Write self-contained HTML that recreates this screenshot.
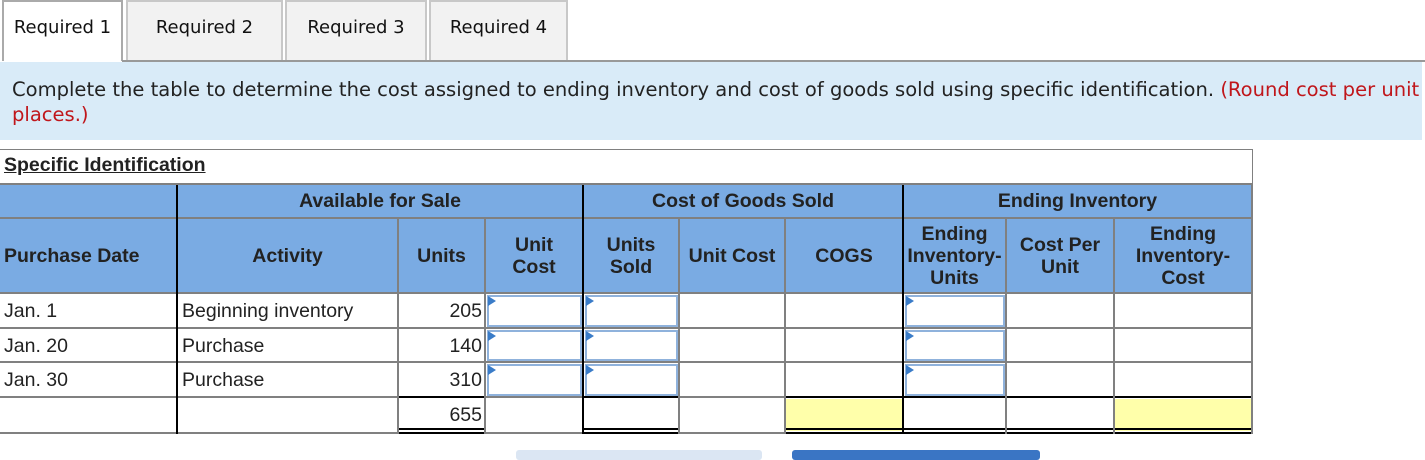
<!DOCTYPE html>
<html><head><meta charset="utf-8"><style>
*{margin:0;padding:0;box-sizing:border-box}
body{width:1425px;height:455px;background:#fff;position:relative;overflow:hidden;font-family:"Liberation Sans",Arial,sans-serif;color:#222}
.a{position:absolute}
.tab{position:absolute;top:0;height:61px;border:2px solid #c8c8c8;border-bottom:none;background:#f2f2f2;font-family:"DejaVu Sans",Verdana,sans-serif;font-size:18px;color:#111;text-align:center;line-height:52px}
.h{position:absolute;background:#808080;height:2px}
.v{position:absolute;background:#808080;width:2px}
.k{background:#000}
.t{position:absolute;font-size:19.5px;color:#222}
.hd{position:absolute;font-size:19.5px;font-weight:bold;color:#222;text-align:center;display:flex;align-items:center;justify-content:center;line-height:22px}
.in{position:absolute;border:2px solid #8fb2dc;background:#fff}
.in:before{content:"";position:absolute;left:-1px;top:-1px;border-left:8px solid #3a7cc8;border-top:5px solid transparent;border-bottom:5px solid transparent}
</style></head><body>
<div class="tab" style="left:2px;width:121px;background:#fff;border-color:#aaa">Required 1</div>
<div class="tab" style="left:126px;width:157px">Required 2</div>
<div class="tab" style="left:285px;width:142px">Required 3</div>
<div class="tab" style="left:429px;width:139px">Required 4</div>
<div class="a" style="left:122px;top:60px;width:1303px;height:2px;background:#999"></div>
<div class="a" style="left:0;top:62px;width:1422px;height:78px;background:#d9ebf8"></div>
<div class="a" style="left:12px;top:77px;width:1410px;overflow:hidden;white-space:nowrap;font-family:'DejaVu Sans',Verdana,sans-serif;font-size:19.55px;line-height:25px;color:#222">Complete the table to determine the cost assigned to ending inventory and cost of goods sold using specific identification. <span style="color:#c0161b">(Round cost per unit answers to 2 decimal</span><br><span style="color:#c0161b">places.)</span></div>

<div class="a" style="left:0;top:149px;width:1253px;height:36px;border:1px solid #808080;border-left:none"></div>
<div class="t" style="left:4px;top:154px;font-weight:bold;text-decoration:underline">Specific Identification</div>

<div class="a" style="left:0;top:185px;width:1252px;height:108px;background:#7aabe3"></div>
<div class="a" style="left:785px;top:399px;width:118px;height:32px;background:#ffffaa"></div>
<div class="a" style="left:1114px;top:399px;width:138px;height:32px;background:#ffffaa"></div>

<div class="h" style="left:0;top:183px;width:1253px"></div>
<div class="h" style="left:0;top:217px;width:1253px"></div>
<div class="h" style="left:0;top:292px;width:1253px"></div>
<div class="h" style="left:0;top:327px;width:1253px"></div>
<div class="h" style="left:0;top:361px;width:1253px"></div>
<div class="h" style="left:0;top:396px;width:1253px"></div>
<div class="h k" style="left:398px;top:396px;width:87px"></div>
<div class="h k" style="left:583px;top:396px;width:96px"></div>
<div class="h k" style="left:785px;top:396px;width:467px"></div>
<div class="h" style="left:0;top:432px;width:1253px"></div>
<div class="h k" style="left:398px;top:428px;width:87px"></div>
<div class="h k" style="left:398px;top:432px;width:87px"></div>
<div class="h k" style="left:583px;top:428px;width:96px"></div>
<div class="h k" style="left:583px;top:432px;width:96px"></div>
<div class="h k" style="left:785px;top:428px;width:467px"></div>
<div class="h k" style="left:785px;top:432px;width:467px"></div>

<div class="v k" style="left:176px;top:185px;height:249px"></div>
<div class="v" style="left:397px;top:219px;height:215px"></div>
<div class="v" style="left:484px;top:219px;height:215px"></div>
<div class="v k" style="left:582px;top:185px;height:249px"></div>
<div class="v" style="left:678px;top:219px;height:215px"></div>
<div class="v" style="left:784px;top:219px;height:215px"></div>
<div class="v k" style="left:902px;top:185px;height:249px"></div>
<div class="v" style="left:1005px;top:219px;height:215px"></div>
<div class="v" style="left:1113px;top:219px;height:215px"></div>
<div class="v" style="left:1251px;top:185px;height:249px"></div>

<div class="hd" style="left:178px;top:185px;width:404px;height:32px">Available for Sale</div>
<div class="hd" style="left:584px;top:185px;width:318px;height:32px">Cost of Goods Sold</div>
<div class="hd" style="left:904px;top:185px;width:347px;height:32px">Ending Inventory</div>
<div class="hd" style="left:4px;top:219px;width:172px;height:73px;justify-content:flex-start">Purchase Date</div>
<div class="hd" style="left:178px;top:219px;width:219px;height:73px">Activity</div>
<div class="hd" style="left:399px;top:219px;width:85px;height:73px">Units</div>
<div class="hd" style="left:486px;top:219px;width:96px;height:73px">Unit<br>Cost</div>
<div class="hd" style="left:584px;top:219px;width:94px;height:73px">Units<br>Sold</div>
<div class="hd" style="left:680px;top:219px;width:104px;height:73px">Unit Cost</div>
<div class="hd" style="left:786px;top:219px;width:116px;height:73px">COGS</div>
<div class="hd" style="left:904px;top:219px;width:101px;height:73px">Ending<br>Inventory-<br>Units</div>
<div class="hd" style="left:1007px;top:219px;width:106px;height:73px">Cost Per<br>Unit</div>
<div class="hd" style="left:1115px;top:219px;width:136px;height:73px">Ending<br>Inventory-<br>Cost</div>

<div class="t" style="left:4px;top:300px">Jan. 1</div>
<div class="t" style="left:4px;top:335px">Jan. 20</div>
<div class="t" style="left:4px;top:369px">Jan. 30</div>
<div class="t" style="left:182px;top:300px">Beginning inventory</div>
<div class="t" style="left:182px;top:335px">Purchase</div>
<div class="t" style="left:182px;top:369px">Purchase</div>
<div class="t" style="left:399px;top:300px;width:83px;text-align:right">205</div>
<div class="t" style="left:399px;top:335px;width:83px;text-align:right">140</div>
<div class="t" style="left:399px;top:369px;width:83px;text-align:right">310</div>
<div class="t" style="left:399px;top:404px;width:83px;text-align:right">655</div>

<div class="in" style="left:487px;top:295px;width:95px;height:32px"></div>
<div class="in" style="left:487px;top:330px;width:95px;height:31px"></div>
<div class="in" style="left:487px;top:364px;width:95px;height:32px"></div>
<div class="in" style="left:585px;top:295px;width:93px;height:32px"></div>
<div class="in" style="left:585px;top:330px;width:93px;height:31px"></div>
<div class="in" style="left:585px;top:364px;width:93px;height:32px"></div>
<div class="in" style="left:905px;top:295px;width:100px;height:32px"></div>
<div class="in" style="left:905px;top:330px;width:100px;height:31px"></div>
<div class="in" style="left:905px;top:364px;width:100px;height:32px"></div>

<div class="a" style="left:516px;top:450px;width:246px;height:10px;background:#dbe6f3;border-radius:3px"></div>
<div class="a" style="left:792px;top:450px;width:248px;height:10px;background:#3a75c4;border-radius:3px"></div>
</body></html>
